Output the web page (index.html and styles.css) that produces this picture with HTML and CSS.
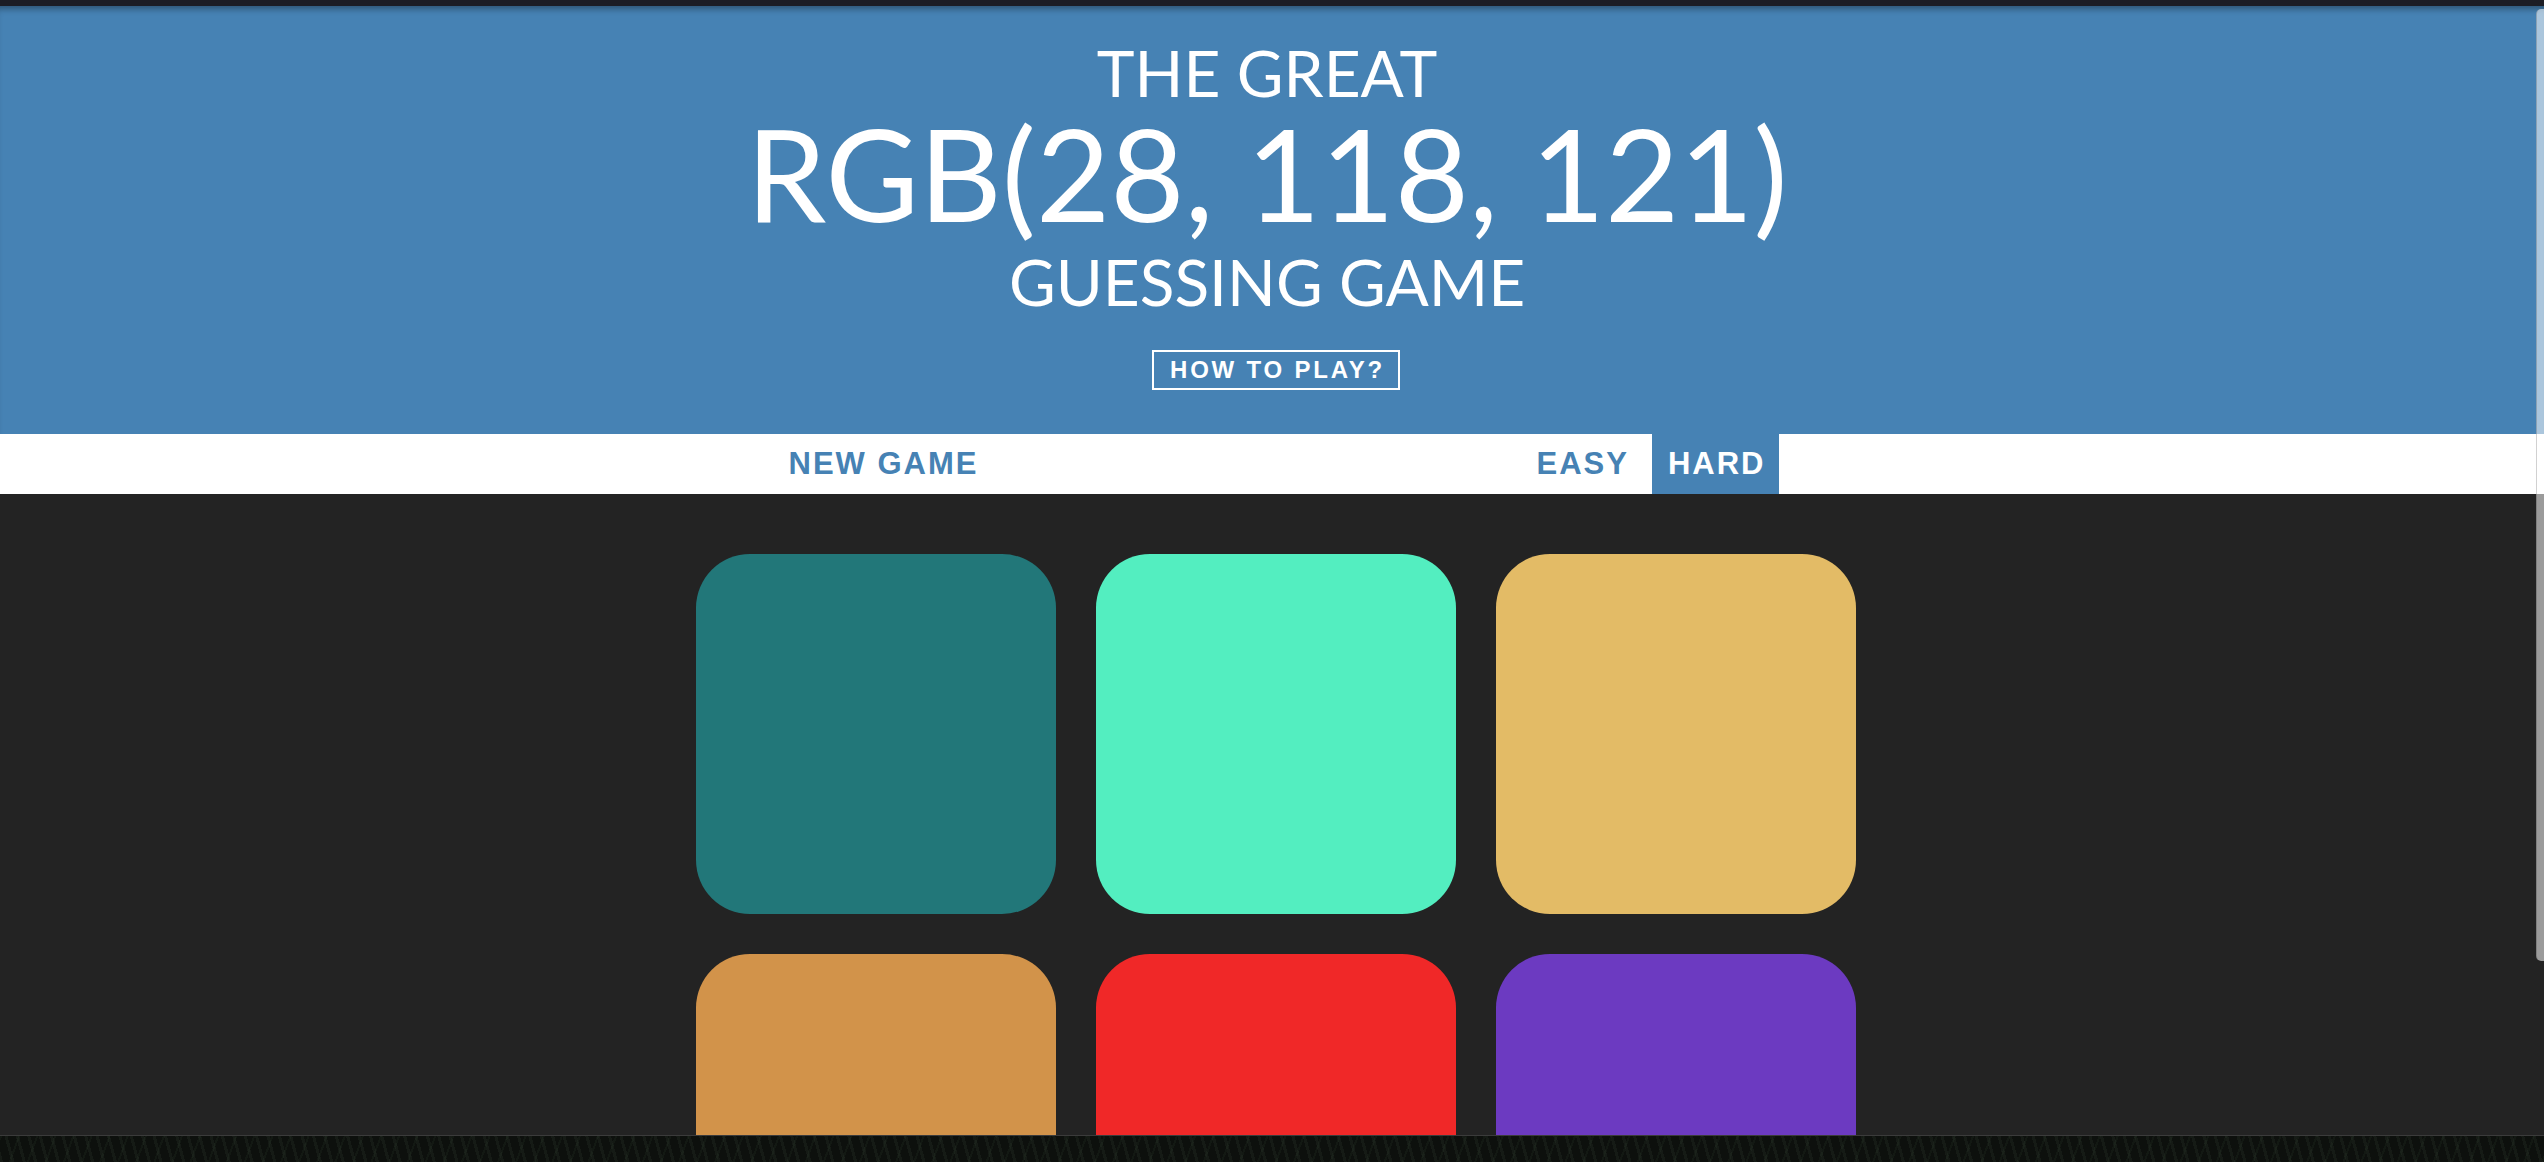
FILE: index.html
```html
<!DOCTYPE html>
<html lang="en">
<head>
<meta charset="utf-8">
<title>Color Game</title>
<link rel="stylesheet" href="styles.css">
</head>
<body>
<div class="window">
  <div class="chrome"></div>
  <header class="hero">
    <h1 class="title">
      <span class="title-line small">THE GREAT</span>
      <span class="title-line big">RGB(28, 118, 121)</span>
      <span class="title-line small last">GUESSING GAME</span>
    </h1>
    <button class="howto">HOW TO PLAY?</button>
  </header>
  <nav class="stripe">
    <button class="stripe-btn">NEW GAME</button>
    <span class="message"></span>
    <button class="stripe-btn">EASY</button>
    <button class="stripe-btn selected">HARD</button>
  </nav>
  <main class="board">
    <div class="grid">
      <div class="square sq-teal"></div>
      <div class="square sq-mint"></div>
      <div class="square sq-gold"></div>
      <div class="square sq-orange"></div>
      <div class="square sq-red"></div>
      <div class="square sq-purple"></div>
    </div>
  </main>
  <div class="scrollbar"></div>
</div>
<div class="wallpaper"></div>
</body>
</html>
```

FILE: styles.css
```css
html, body {
  margin: 0;
  padding: 0;
}

body {
  width: 2544px;
  height: 1162px;
  overflow: hidden;
  background: #0c0f0c;
  font-family: "Lato", "Noto Sans", sans-serif;
}

.window {
  position: relative;
  height: 1135px;
  overflow: hidden;
  background: #232323;
  border-bottom: 1px solid #3b3b3b;
}

.chrome {
  height: 6px;
  background: #1c1d25;
}

.hero {
  background: #4682b4;
  padding: 32px 0 44px 8px;
  text-align: center;
  box-shadow: inset 0 7px 6px -4px rgba(0, 0, 0, 0.35);
}

.title {
  margin: 0;
  font-weight: 400;
  color: #ffffff;
  padding-right: 18px;
}

.title-line {
  display: block;
}

.title-line.small {
  font-size: 64px;
  line-height: 70px;
}

.title-line.last {
  line-height: 88px;
}

.title-line.big {
  font-size: 128px;
  line-height: 130px;
}

.howto {
  margin-top: 24px;
  height: 40px;
  box-sizing: border-box;
  border: 2px solid #ffffff;
  background: transparent;
  color: #ffffff;
  font-family: "Liberation Sans", Arial, sans-serif;
  font-weight: 700;
  font-size: 24px;
  line-height: 36px;
  letter-spacing: 2.8px;
  padding: 0 13px 0 16px;
}

.stripe {
  height: 60px;
  background: #ffffff;
  display: flex;
  justify-content: center;
  gap: 9px;
  padding-left: 8px;
}

.stripe-btn {
  border: none;
  background: none;
  margin: 0;
  padding: 0 14px 0 16px;
  height: 60px;
  font-family: "Liberation Sans", Arial, sans-serif;
  font-weight: 700;
  font-size: 31px;
  line-height: 60px;
  letter-spacing: 2px;
  color: #4682b4;
}

.stripe-btn.selected {
  background: #4682b4;
  color: #ffffff;
}

.message {
  width: 510px;
}

.board {
  padding: 40px 0 0 8px;
}

.grid {
  width: 1160px;
  margin: 0 auto;
  padding: 20px;
  display: grid;
  grid-template-columns: repeat(3, 360px);
  gap: 40px;
}

.square {
  height: 360px;
  border-radius: 15%;
}

.sq-teal { background: #227779; }
.sq-mint { background: #53eec0; }
.sq-gold { background: #e3bb66; }
.sq-orange { background: #d2934a; }
.sq-red { background: #f02828; }
.sq-purple { background: #6c3ac1; }

.scrollbar {
  position: absolute;
  top: 9px;
  right: 0;
  width: 7px;
  height: 952px;
  background: rgba(255, 255, 255, 0.55);
  border-left: 1px solid rgba(0, 0, 0, 0.18);
  border-radius: 5px 0 0 5px;
}

.wallpaper {
  height: 26px;
  background:
    repeating-linear-gradient(75deg, rgba(60, 75, 60, 0.18) 0 3px, transparent 3px 11px),
    repeating-linear-gradient(110deg, rgba(40, 55, 40, 0.22) 0 2px, transparent 2px 17px),
    #0d100d;
}
```
